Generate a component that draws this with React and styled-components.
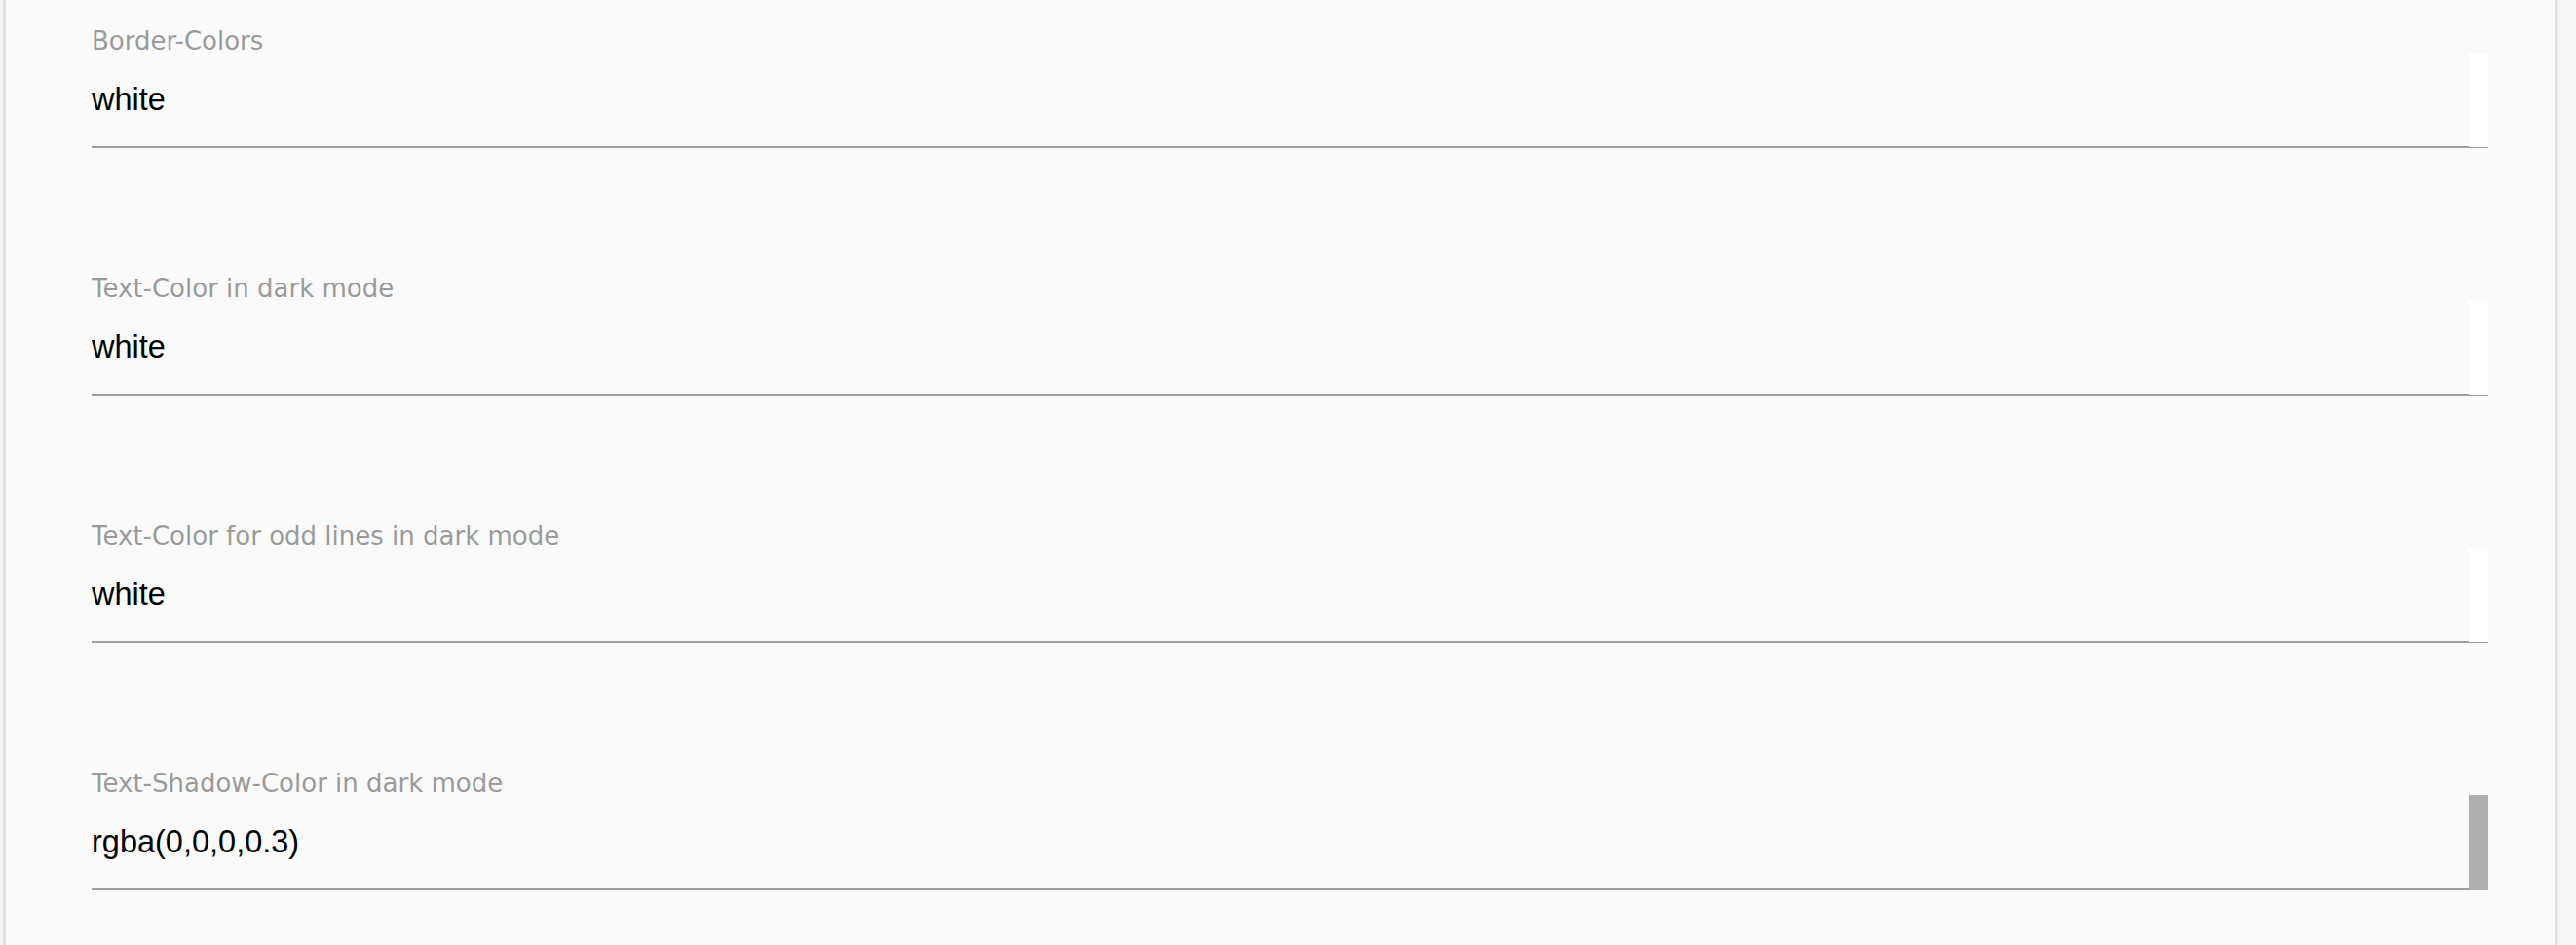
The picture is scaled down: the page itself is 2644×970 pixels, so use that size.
import React from 'react'
import styled, { createGlobalStyle } from 'styled-components';

const GlobalStyle = createGlobalStyle`
  html, body {
    margin: 0;
    padding: 0;
    height: 100%;
    overflow: hidden;
    background: #f7f7f7;
  }
`;

const fields = [
    { label: 'Border-Colors', value: 'white' },
    { label: 'Text-Color in dark mode', value: 'white' },
    { label: 'Text-Color for odd lines in dark mode', value: 'white' },
    { label: 'Text-Shadow-Color in dark mode', value: 'rgba(0,0,0,0.3)', scrolled: true },
];

export default function App() {
    return (
        <>
            <GlobalStyle />
            <Panel>
                {fields.map((f) => (
                    <Field key={f.label}>
                        <Label>{f.label}</Label>
                        <InputRow>
                            <Value>{f.value}</Value>
                            <Track $thumb={f.scrolled} />
                        </InputRow>
                    </Field>
                ))}
            </Panel>
        </>
    )
}

const Panel = styled.div`
  box-sizing: border-box;
  min-height: 100vh;
  width: 2622px;
  margin-left: 3px;
  padding: 27px 68px 0 88px;
  background: #fafafa;
  border-left: 3px solid #e2e2e2;
  border-right: 3px solid #e0e0e0;
  box-shadow: 0 0 3px rgba(0, 0, 0, 0.08);
  display: flex;
  flex-direction: column;
  gap: 129px;
`;

const Field = styled.div`
  display: flex;
  flex-direction: column;
`;

const Label = styled.div`
  height: 27px;
  padding-top: 2px;
  box-sizing: border-box;
  font-family: "DejaVu Sans", "Liberation Sans", sans-serif;
  font-size: 26px;
  line-height: 27px;
  color: #9a9a9a;
  white-space: nowrap;
`;

const InputRow = styled.div`
  display: flex;
  height: 96px;
  border-bottom: 2px solid #9e9e9e;
`;

const Value = styled.div`
  flex: 1;
  padding-top: 28px;
  font-family: "Liberation Sans", Arial, sans-serif;
  font-size: 32.5px;
  line-height: 40px;
  color: #000;
`;

const Track = styled.div`
  width: 20px;
  margin-bottom: ${(p) => (p.$thumb ? '-2px' : '-1px')};
  background: ${(p) => (p.$thumb ? '#afafaf' : '#ffffff')};
`;
